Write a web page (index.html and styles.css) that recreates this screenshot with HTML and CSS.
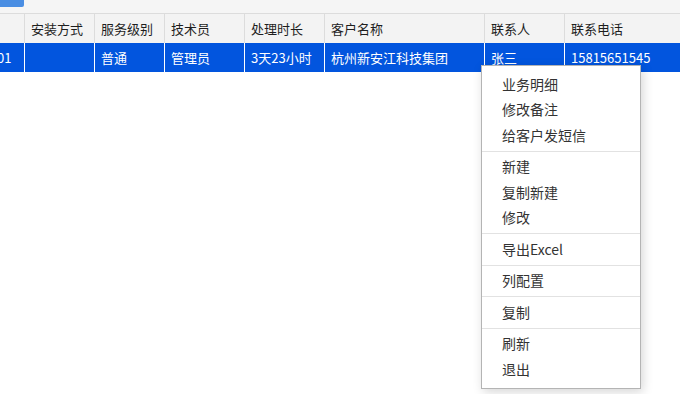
FILE: index.html
```html
<!DOCTYPE html>
<html lang="zh-CN">
<head>
<meta charset="utf-8">
<title>服务单列表</title>
<link rel="stylesheet" href="styles.css">
</head>
<body>
<div class="page">
  <div class="toolbar"><span class="tool-btn"></span></div>
  <div class="grid">
    <div class="row head">
      <div class="cell"></div>
      <div class="cell">安装方式</div>
      <div class="cell">服务级别</div>
      <div class="cell">技术员</div>
      <div class="cell">处理时长</div>
      <div class="cell">客户名称</div>
      <div class="cell">联系人</div>
      <div class="cell">联系电话</div>
    </div>
    <div class="row selected">
      <div class="cell"><span class="cut">01</span></div>
      <div class="cell"></div>
      <div class="cell">普通</div>
      <div class="cell">管理员</div>
      <div class="cell">3天23小时</div>
      <div class="cell">杭州新安江科技集团</div>
      <div class="cell">张三</div>
      <div class="cell">15815651545</div>
    </div>
  </div>
  <ul class="menu">
    <li class="item">业务明细</li>
    <li class="item">修改备注</li>
    <li class="item">给客户发短信</li>
    <li class="sep"></li>
    <li class="item">新建</li>
    <li class="item">复制新建</li>
    <li class="item">修改</li>
    <li class="sep"></li>
    <li class="item">导出Excel</li>
    <li class="sep"></li>
    <li class="item">列配置</li>
    <li class="sep"></li>
    <li class="item">复制</li>
    <li class="sep"></li>
    <li class="item">刷新</li>
    <li class="item">退出</li>
  </ul>
</div>
</body>
</html>
```

FILE: styles.css
```css
* { box-sizing: border-box; }
html, body {
  margin: 0;
  padding: 0;
  background: #fff;
  overflow: hidden;
}
body {
  font-family: "Noto Sans CJK SC", "Noto Sans", sans-serif;
  font-size: 13px;
  color: #333;
}
.page {
  position: relative;
  width: 680px;
  height: 394px;
  overflow: hidden;
}
.toolbar {
  height: 14px;
  background: #f5f5f5;
  border-bottom: 1px solid #dcdcdc;
}
.tool-btn {
  display: block;
  width: 24px;
  height: 7px;
  background: #4a8ee3;
  border-radius: 0 0 2px 0;
}
.grid {
  width: 780px;
}
.row {
  display: grid;
  grid-template-columns: 25px 70px 70px 80px 80px 160px 80px 215px;
  height: 29px;
}
.cell {
  border-right: 1px solid #dcdcdc;
  padding-left: 6px;
  line-height: 29px;
  white-space: nowrap;
  overflow: hidden;
}
.head {
  background: #f3f3f3;
  color: #1e1e1e;
}
.selected {
  background: #0255de;
  color: #fff;
}
.selected .cell {
  border-right-color: #fff;
}
.cut {
  display: inline-block;
  margin-left: -9px;
}
.menu {
  position: absolute;
  left: 481px;
  top: 65px;
  width: 160px;
  margin: 0;
  padding: 5.5px 0;
  list-style: none;
  background: #fff;
  border: 1px solid #b4b4b4;
  box-shadow: 2px 3px 10px rgba(0, 0, 0, 0.16);
  font-size: 14px;
  color: #333;
}
.item {
  height: 25.5px;
  line-height: 25.5px;
  padding-left: 20px;
  white-space: nowrap;
}
.sep {
  height: 1px;
  margin: 2.5px 0;
  background: #e2e2e2;
}
```
